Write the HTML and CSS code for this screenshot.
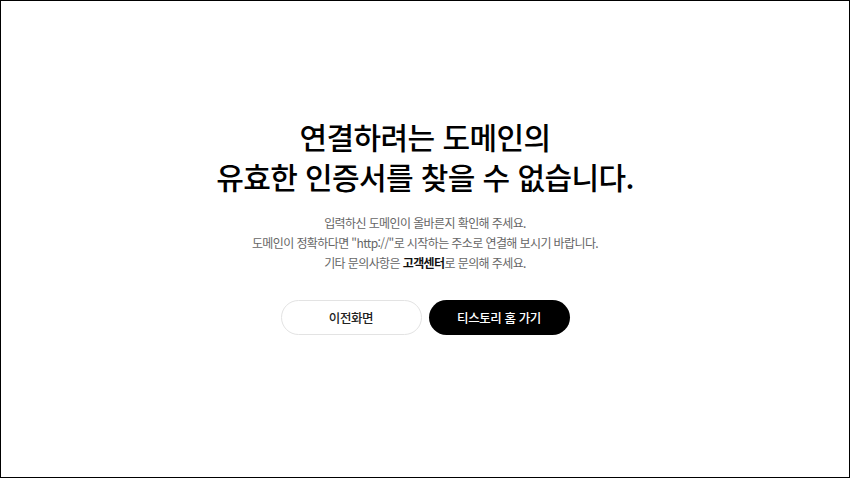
FILE: index.html
```html
<!DOCTYPE html>
<html lang="ko">
<head>
<meta charset="utf-8">
<title>인증서 오류</title>
<link rel="stylesheet" href="styles.css">
</head>
<body>
<div class="frame">
  <main class="content">
    <h1 class="title">연결하려는 도메인의<br>유효한 인증서를 찾을 수 없습니다.</h1>
    <p class="desc">입력하신 도메인이 올바른지 확인해 주세요.<br>도메인이 정확하다면 "http://"로 시작하는 주소로 연결해 보시기 바랍니다.<br>기타 문의사항은 <a class="link" href="#">고객센터</a>로 문의해 주세요.</p>
    <div class="actions">
      <a class="btn btn-light" href="#">이전화면</a>
      <a class="btn btn-dark" href="#">티스토리 홈 가기</a>
    </div>
  </main>
</div>
</body>
</html>
```
FILE: styles.css
```css
html, body {
  margin: 0;
  padding: 0;
  background: #fff;
}
.frame {
  box-sizing: border-box;
  width: 850px;
  height: 478px;
  border: 1px solid #000;
  font-family: "Noto Sans CJK KR", "Noto Sans", sans-serif;
}
.content {
  padding-top: 115px;
  text-align: center;
}
.title {
  margin: 0;
  font-size: 30px;
  line-height: 40px;
  font-weight: 500;
  color: #000;
  letter-spacing: -0.6px;
}
.desc {
  margin: 17px 0 0;
  font-size: 12px;
  line-height: 20px;
  color: #666;
  letter-spacing: -0.6px;
}
.link {
  color: #111;
  font-weight: 700;
  text-decoration: none;
}
.actions {
  display: flex;
  justify-content: center;
  gap: 7px;
  margin-top: 27px;
}
.btn {
  box-sizing: border-box;
  width: 141px;
  height: 35px;
  border-radius: 18px;
  display: flex;
  align-items: center;
  justify-content: center;
  font-size: 12.5px;
  font-weight: 500;
  letter-spacing: -0.4px;
  text-decoration: none;
}
.btn-light {
  border: 1px solid #e3e3e3;
  color: #222;
  background: #fff;
}
.btn-dark {
  background: #000;
  color: #fff;
}
```
